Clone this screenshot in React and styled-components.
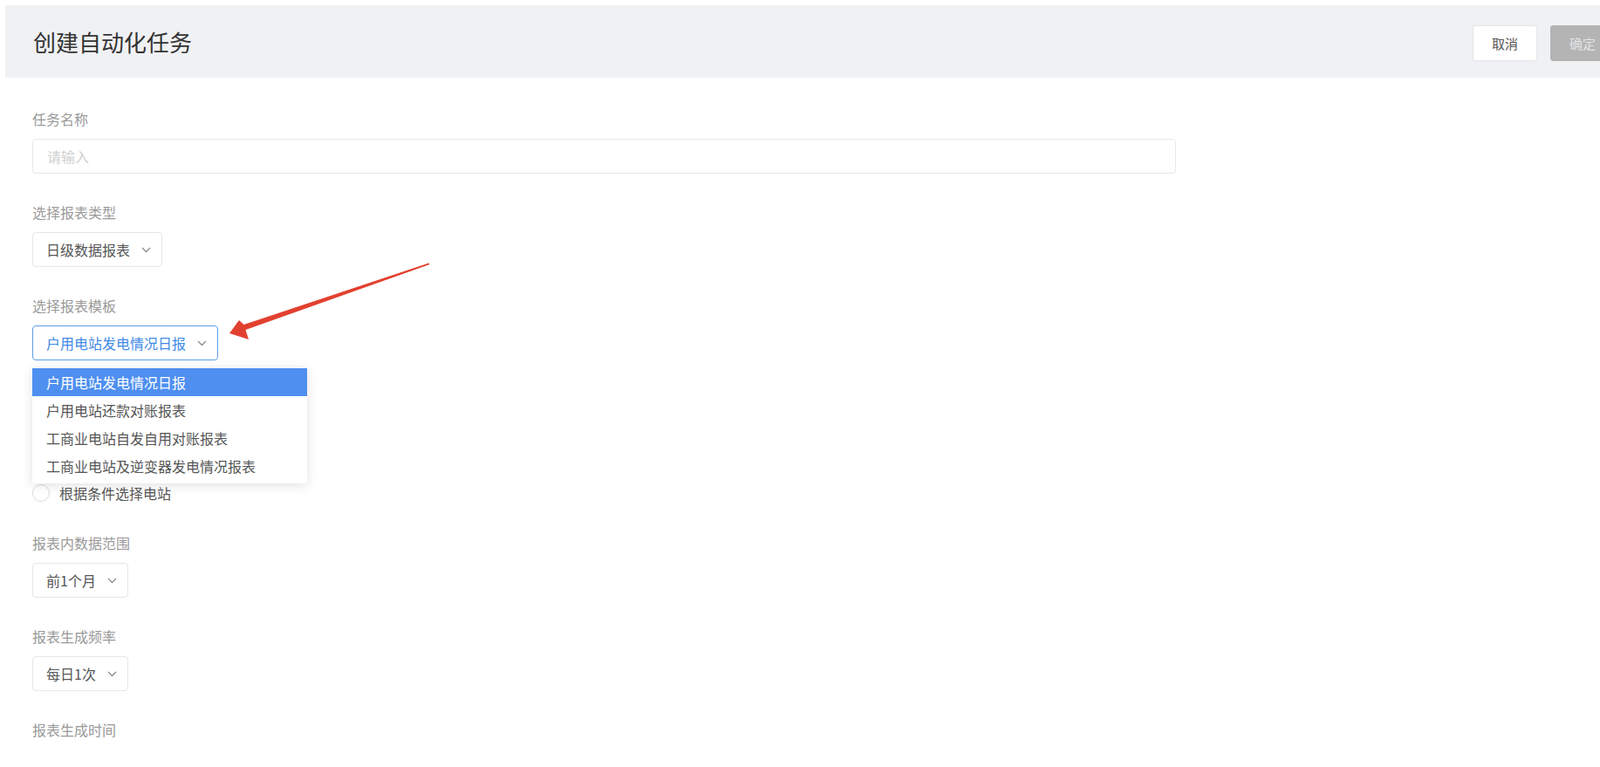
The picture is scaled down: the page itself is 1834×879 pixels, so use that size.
import styled, { createGlobalStyle } from 'styled-components'

const GlobalStyle = createGlobalStyle`
  html, body {
    margin: 0;
    padding: 0;
    background: #ffffff;
    overflow: hidden;
  }
  body {
    font-family: "Noto Sans CJK SC", "Noto Sans", "Liberation Sans", sans-serif;
    color: #555;
  }
  * {
    box-sizing: border-box;
  }
`

const Page = styled.div`
  position: relative;
  width: 1881px;
  min-height: 879px;
  padding: 6px 0 0 6px;
`

const Header = styled.header`
  display: flex;
  align-items: center;
  justify-content: space-between;
  height: 83px;
  padding: 0 30px 0 32px;
  background: #f0f1f4;
`

const Title = styled.h1`
  margin: 0;
  font-size: 26px;
  font-weight: 400;
  color: #333;
  line-height: 34px;
`

const Actions = styled.div`
  display: flex;
  gap: 15px;
  padding-top: 4px;
`

const Button = styled.button`
  width: 74px;
  height: 41px;
  border-radius: 3px;
  font-family: inherit;
  font-size: 15px;
  cursor: pointer;
  border: 1px solid ${p => (p.$primary ? '#b4b4b4' : '#e6e6e6')};
  background: ${p => (p.$primary ? '#b4b4b4' : '#ffffff')};
  color: ${p => (p.$primary ? '#e4e4e4' : '#555')};
`

const Form = styled.div`
  padding: 36px 0 0 31px;
`

const Field = styled.div`
  margin-bottom: ${p => p.$gap || 33}px;
`

const Label = styled.div`
  font-size: 16px;
  line-height: 22px;
  color: #999;
  margin-bottom: 12px;
  visibility: ${p => (p.$covered ? 'hidden' : 'visible')};
`

const TextInput = styled.input`
  display: block;
  width: 1311px;
  height: 40px;
  padding: 0 16px;
  border: 1px solid #e8e8e8;
  border-radius: 4px;
  font-family: inherit;
  font-size: 16px;
  color: #555;
  outline: none;

  &::placeholder {
    color: #cfcfcf;
  }
`

const SelectWrap = styled.div`
  position: relative;
  display: inline-block;
`

const SelectBox = styled.div`
  display: inline-flex;
  align-items: center;
  gap: 13px;
  height: 40px;
  padding: 0 12px 0 15px;
  border: 1px solid ${p => (p.$open ? '#5d9de8' : '#e6e6e6')};
  border-radius: 4px;
  font-size: 16px;
  color: ${p => (p.$open ? '#3f8ae6' : '#555')};
  background: #fff;
`

const Menu = styled.ul`
  position: absolute;
  top: 49px;
  left: 0;
  z-index: 10;
  width: 315px;
  margin: 0;
  padding: 0 0 4px;
  list-style: none;
  background: #fff;
  box-shadow: 0 2px 12px rgba(0, 0, 0, 0.12);
`

const MenuItem = styled.li`
  height: 32px;
  line-height: 32px;
  padding: 0 16px;
  font-size: 16px;
  color: ${p => (p.$active ? '#ffffff' : '#555')};
  background: ${p => (p.$active ? '#4e8ff0' : 'transparent')};
`

const RadioGroup = styled.div`
  display: flex;
  flex-direction: column;
  gap: 15px;
`

const RadioRow = styled.label`
  display: flex;
  align-items: center;
  gap: 11px;
  height: 22px;
  font-size: 16px;
  color: #555;
  visibility: ${p => (p.$covered ? 'hidden' : 'visible')};
`

const RadioDot = styled.span`
  width: 20px;
  height: 20px;
  border-radius: 50%;
  border: 1px solid #dcdcdc;
  background: #fff;
`

const Annotation = styled.svg`
  position: absolute;
  left: 0;
  top: 0;
  pointer-events: none;
`

const Chevron = () => (
  <svg width="11" height="7" viewBox="0 0 11 7">
    <polyline points="1,1 5.5,5.5 10,1" fill="none" stroke="#8c8c8c" strokeWidth="1.3" />
  </svg>
)

const Select = ({ value, open, options }) => (
  <SelectWrap>
    <SelectBox $open={open}>
      <span>{value}</span>
      <Chevron />
    </SelectBox>
    {open && (
      <Menu>
        {options.map(opt => (
          <MenuItem key={opt} $active={opt === value}>{opt}</MenuItem>
        ))}
      </Menu>
    )}
  </SelectWrap>
)

const templates = [
  '户用电站发电情况日报',
  '户用电站还款对账报表',
  '工商业电站自发自用对账报表',
  '工商业电站及逆变器发电情况报表'
]

const App = () => (
  <>
    <GlobalStyle />
    <Page>
      <Header>
        <Title>创建自动化任务</Title>
        <Actions>
          <Button>取消</Button>
          <Button $primary>确定</Button>
        </Actions>
      </Header>
      <Form>
        <Field>
          <Label>任务名称</Label>
          <TextInput placeholder="请输入" />
        </Field>
        <Field>
          <Label>选择报表类型</Label>
          <Select value="日级数据报表" />
        </Field>
        <Field>
          <Label>选择报表模板</Label>
          <Select value="户用电站发电情况日报" open options={templates} />
        </Field>
        {/* the open menu covers the label and the first two options */}
        <Field $gap={35}>
          <Label $covered>选择电站</Label>
          <RadioGroup>
            <RadioRow $covered><RadioDot />全部电站</RadioRow>
            <RadioRow $covered><RadioDot />手动选择电站</RadioRow>
            <RadioRow><RadioDot />根据条件选择电站</RadioRow>
          </RadioGroup>
        </Field>
        <Field>
          <Label>报表内数据范围</Label>
          <Select value="前1个月" />
        </Field>
        <Field>
          <Label>报表生成频率</Label>
          <Select value="每日1次" />
        </Field>
        <Field>
          <Label>报表生成时间</Label>
        </Field>
      </Form>
      <Annotation width="520" height="420" viewBox="0 0 520 420">
        <polygon
          points="263,382 274,367 279.5,372 491.5,301.5 492.5,303 281.5,378 285,389"
          fill="#e2402f"
        />
      </Annotation>
    </Page>
  </>
)

export default App
